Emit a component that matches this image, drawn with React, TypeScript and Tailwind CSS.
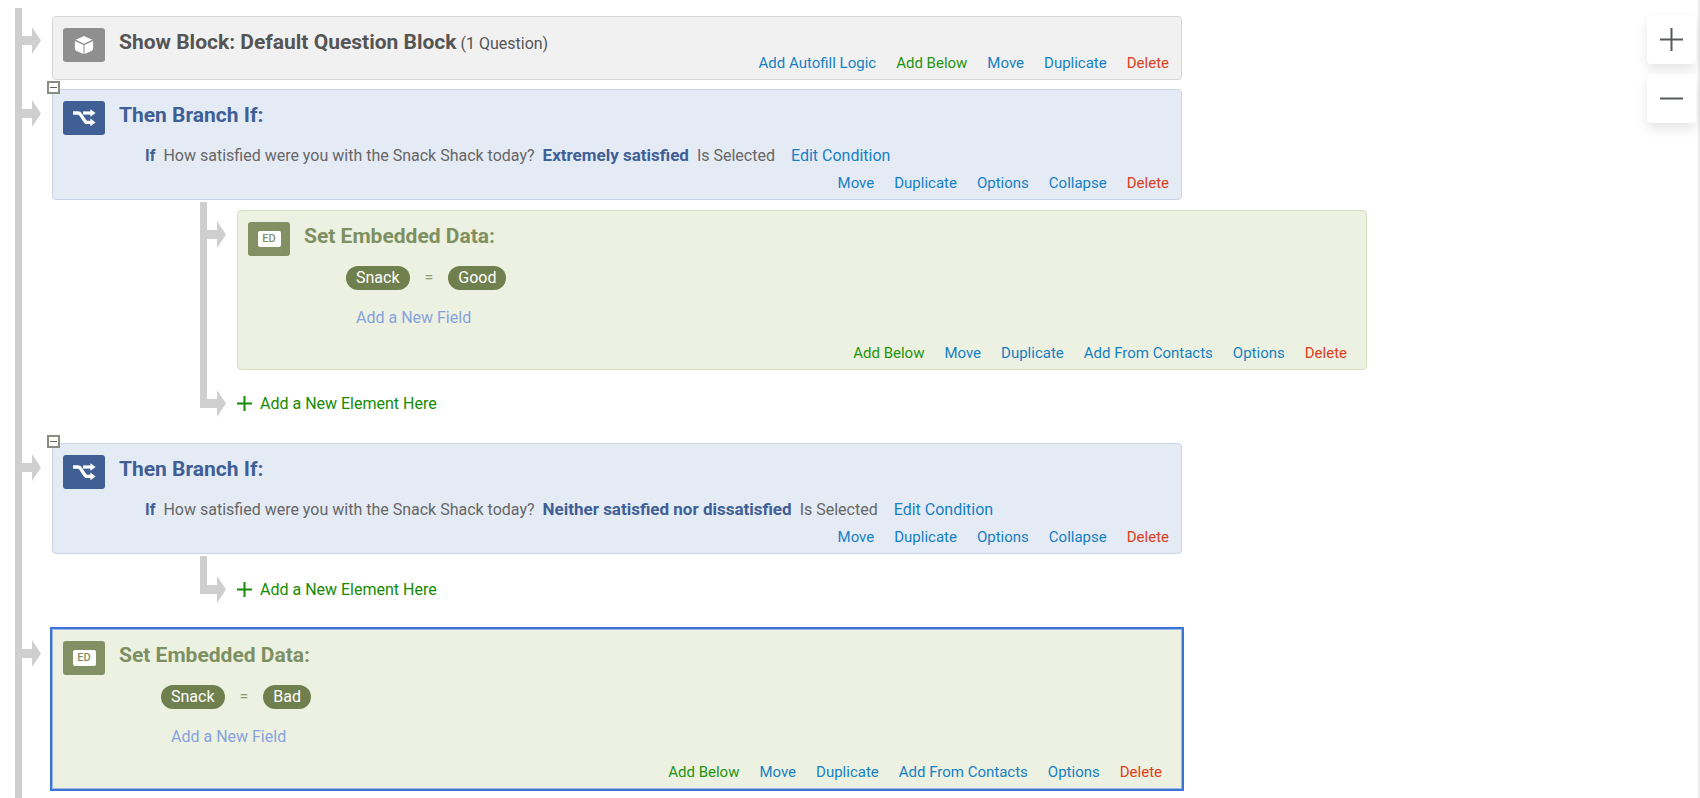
import { useState } from 'react';
import type { ReactNode } from 'react';

type Tone = 'gray' | 'blue' | 'green';

const cardTones: Record<Tone, string> = {
    gray: 'bg-[#f1f1f1] border-[#d6d6d6]',
    blue: 'bg-[#e5ebf5] border-[#c9d4e4]',
    green: 'bg-[#edf1e1] border-[#d6dfc3]',
};

const iconTones: Record<Tone, string> = {
    gray: 'bg-[#8f8f8f]',
    blue: 'bg-[#405f94]',
    green: 'bg-[#829064]',
};

const titleTones: Record<Tone, string> = {
    gray: 'text-[#555555]',
    blue: 'text-[#3f5f96]',
    green: 'text-[#7e9061]',
};

const BlockIcon = () => (
    <svg width="20" height="20" viewBox="0 0 20 20" aria-hidden="true">
        <path d="M10 1 L18.2 4.8 L10 8.7 L1.8 4.8 Z" fill="#fff" />
        <path d="M0.9 6 L9.5 9.9 V19 L2.2 15.7 Q0.9 15 0.9 13.8 Z" fill="#fff" />
        <path d="M19.1 6 L10.5 9.9 V19 L17.8 15.7 Q19.1 15 19.1 13.8 Z" fill="#fff" />
    </svg>
);

const BranchIcon = () => (
    <svg width="24" height="18" viewBox="0 0 24 18" aria-hidden="true">
        <path d="M1 4 H6 Q7.6 4 8.6 5.6 L12.6 11.6 Q13.6 13.4 15.4 13.4 H19" fill="none" stroke="#fff" strokeWidth="3.4" />
        <path d="M11 4 H19" fill="none" stroke="#fff" strokeWidth="3.2" />
        <path d="M18.4 0.2 L23.6 4 L18.4 7.8 Z" fill="#fff" />
        <path d="M18.4 9.6 L23.6 13.4 L18.4 17.2 Z" fill="#fff" />
    </svg>
);

const EmbeddedIcon = () => (
    <span className="flex h-4 w-[23px] items-center justify-center rounded-xs bg-white text-[11px] leading-4 font-medium text-[#829064]">
        ED
    </span>
);

const Arrow = () => (
    <svg className="shrink-0" width="19" height="27" viewBox="0 0 19 27" aria-hidden="true">
        <path d="M0 9 H10 V0 L19 13.5 L10 27 V18 H0 Z" fill="#cfcfcf" />
    </svg>
);

const linkTones: Record<string, string> = {
    'Add Below': 'text-[#1f9410]',
    Delete: 'text-[#dc3f1a]',
};

const Actions = ({ items }: { items: string[] }) => (
    <div className="flex flex-wrap justify-end gap-x-5 pr-0.5 text-[15px] leading-4">
        {items.map((item) => (
            <a key={item} href="#" className={linkTones[item] ?? 'text-[#1580c4]'}>
                {item}
            </a>
        ))}
    </div>
);

type CardProps = {
    tone: Tone;
    icon: ReactNode;
    title: string;
    note?: string;
    selected?: boolean;
    children: ReactNode;
};

const Card = ({ tone, icon, title, note, selected, children }: CardProps) => (
    <div
        className={`flex w-full max-w-[1130px] gap-3.5 border px-2.5 pt-[11px] pb-2 ${selected ? 'border-[#9bb8e8] bg-[#edf1e1] outline-2 outline-[#3c74d6]' : `rounded-sm ${cardTones[tone]}`}`}
    >
        <div className={`flex h-[34px] w-[42px] shrink-0 items-center justify-center rounded-[3px] ${iconTones[tone]}`}>
            {icon}
        </div>
        <div className="min-w-0 flex-1">
            <h2 className={`pt-0.5 text-[21px] leading-[25px] font-bold ${titleTones[tone]}`}>
                {title}
                {note && <span className="text-base leading-5 font-normal"> {note}</span>}
            </h2>
            {children}
        </div>
    </div>
);

// One step on a trunk line: arrow on the left, content beside it
const Step = ({ children }: { children: ReactNode }) => (
    <div className="flex items-start">
        <div className="mr-[11px] pt-[11px]">
            <Arrow />
        </div>
        <div className="min-w-0 flex-1">{children}</div>
    </div>
);

const AddElement = () => (
    <div className="flex">
        <div className="h-[38px] w-[7px] bg-[#cfcfcf]" />
        <div className="flex items-center pt-5">
            <Arrow />
            <button type="button" className="ml-[11px] flex items-center gap-2 text-base leading-5 text-[#168a02]">
                <svg width="15" height="15" viewBox="0 0 15 15" aria-hidden="true">
                    <path d="M7.5 0 V15 M0 7.5 H15" stroke="currentColor" strokeWidth="2" />
                </svg>
                Add a New Element Here
            </button>
        </div>
    </div>
);

const Branch = ({ answer, children }: { answer: string; children?: ReactNode }) => {
    const [open, setOpen] = useState(true);

    return (
        <>
            <div className="relative">
                <Card tone="blue" icon={<BranchIcon />} title="Then Branch If:">
                    <p className="mt-4 mb-2 ml-[26px] flex flex-wrap items-baseline gap-x-2 text-base leading-[22px] text-[#666666]">
                        <b className="text-[#3f5f96]">If</b>
                        <span>How satisfied were you with the Snack Shack today?</span>
                        <b className="text-[17px] text-[#3f5f96]">{answer}</b>
                        <span>Is Selected</span>
                        <a href="#" className="ml-2 text-[#1580c4]">Edit Condition</a>
                    </p>
                    <Actions items={['Move', 'Duplicate', 'Options', 'Collapse', 'Delete']} />
                </Card>
                <button
                    type="button"
                    aria-label="Toggle branch"
                    onClick={() => setOpen(!open)}
                    className="absolute -top-2 -left-[5px] flex h-[13px] w-[13px] items-center justify-center border-2 border-[#8a8c80] bg-white"
                >
                    <span className="h-px w-[7px] bg-[#666666]" />
                </button>
            </div>
            {open && (
                <div className="mt-0.5 ml-[148px]">
                    {children}
                    <AddElement />
                </div>
            )}
        </>
    );
};

const EmbeddedData = ({ value, selected }: { value: string; selected?: boolean }) => (
    <Card tone="green" icon={<EmbeddedIcon />} title="Set Embedded Data:" selected={selected}>
        <div className="mt-[17px] ml-[42px] flex items-center text-base leading-6 text-white">
            <span className="rounded-full bg-[#707f4e] px-2.5">Snack</span>
            <span className="px-[15px] text-[#8a9a6c]">=</span>
            <span className="rounded-full bg-[#707f4e] px-2.5">{value}</span>
        </div>
        <a href="#" className="mt-[18px] mb-[17px] ml-[52px] block w-fit text-base leading-5 text-[#86a2e0]">
            Add a New Field
        </a>
        <div className="pr-[7px]">
            <Actions items={['Add Below', 'Move', 'Duplicate', 'Add From Contacts', 'Options', 'Delete']} />
        </div>
    </Card>
);

const ZoomButton = ({ label, path }: { label: string; path: string }) => (
    <button
        type="button"
        aria-label={label}
        className="flex h-[49px] w-[49px] items-center justify-center rounded-sm bg-white shadow-[0_6px_12px_rgba(0,0,0,0.1)]"
    >
        <svg width="23" height="23" viewBox="0 0 23 23" aria-hidden="true">
            <path d={path} stroke="#55585c" strokeWidth="2" />
        </svg>
    </button>
);

const App = () => {
    return (
        <div className="flex min-h-screen bg-white font-['Roboto',sans-serif]">
            <main className="flex flex-1 pt-2 pl-[15px]">
                <div className="w-[7px] bg-[#cfcfcf]" />
                <div className="min-w-0 flex-1 pt-2">
                    <Step>
                        <Card tone="gray" icon={<BlockIcon />} title="Show Block: Default Question Block" note="(1 Question)">
                            <Actions items={['Add Autofill Logic', 'Add Below', 'Move', 'Duplicate', 'Delete']} />
                        </Card>
                    </Step>
                    <div className="mt-[9px]">
                        <Step>
                            <Branch answer="Extremely satisfied">
                                <div className="flex">
                                    <div className="w-[7px] bg-[#cfcfcf]" />
                                    <div className="flex-1 pt-2">
                                        <Step>
                                            <EmbeddedData value="Good" />
                                        </Step>
                                    </div>
                                </div>
                            </Branch>
                        </Step>
                    </div>
                    <div className="mt-[26px]">
                        <Step>
                            <Branch answer="Neither satisfied nor dissatisfied" />
                        </Step>
                    </div>
                    <div className="mt-[26px]">
                        <Step>
                            <EmbeddedData value="Bad" selected />
                        </Step>
                    </div>
                </div>
            </main>
            <aside className="flex flex-col gap-2.5 border-r-2 border-[#ececec] pt-[15px] pr-0.5">
                <ZoomButton label="Zoom in" path="M11.5 0 V23 M0 11.5 H23" />
                <ZoomButton label="Zoom out" path="M0 11.5 H23" />
            </aside>
        </div>
    );
};

export default App;
